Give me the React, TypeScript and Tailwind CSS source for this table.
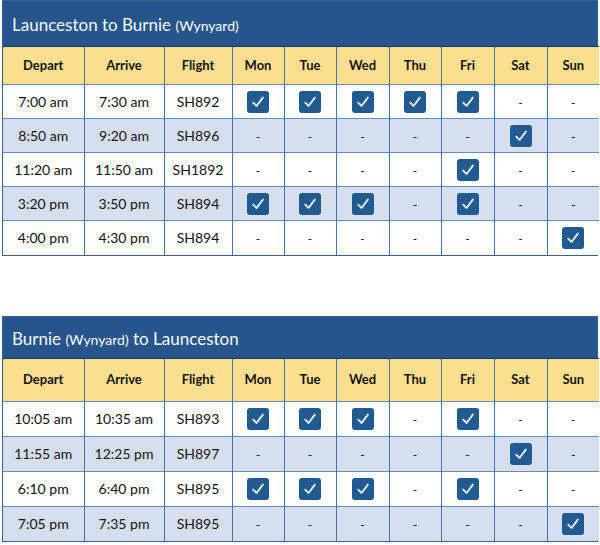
import React from "react";

type Row = { d: string; a: string; f: string; days: boolean[] };

const cols = [81, 80, 68, 52, 52, 53, 52, 53, 53, 52];
const dayNames = ["Mon", "Tue", "Wed", "Thu", "Fri", "Sat", "Sun"];

const t1: Row[] = [
  { d: "7:00 am", a: "7:30 am", f: "SH892", days: [true, true, true, true, true, false, false] },
  { d: "8:50 am", a: "9:20 am", f: "SH896", days: [false, false, false, false, false, true, false] },
  { d: "11:20 am", a: "11:50 am", f: "SH1892", days: [false, false, false, false, true, false, false] },
  { d: "3:20 pm", a: "3:50 pm", f: "SH894", days: [true, true, true, false, true, false, false] },
  { d: "4:00 pm", a: "4:30 pm", f: "SH894", days: [false, false, false, false, false, false, true] },
];

const t2: Row[] = [
  { d: "10:05 am", a: "10:35 am", f: "SH893", days: [true, true, true, false, true, false, false] },
  { d: "11:55 am", a: "12:25 pm", f: "SH897", days: [false, false, false, false, false, true, false] },
  { d: "6:10 pm", a: "6:40 pm", f: "SH895", days: [true, true, true, false, true, false, false] },
  { d: "7:05 pm", a: "7:35 pm", f: "SH895", days: [false, false, false, false, false, false, true] },
];

function Check() {
  return (
    <span className="inline-flex h-[22px] w-[22px] items-center justify-center rounded-[3px] bg-[#215a8f] align-middle">
      <svg width="16" height="16" viewBox="0 0 16 16">
        <path d="M3.2 8.6 L6.6 12 L12.8 3.6" fill="none" stroke="#dce7f4" strokeWidth="2" strokeLinecap="round" strokeLinejoin="round" />
      </svg>
    </span>
  );
}

function Timetable({
  title,
  rows,
  titleH,
  headH,
  rowH,
}: {
  title: React.ReactNode;
  rows: Row[];
  titleH: string;
  headH: string;
  rowH: string;
}) {
  return (
    <div className="ml-[2px] w-[596px] border border-[#3d5f8c]">
      <div className={`flex items-center bg-[#25558a] pl-[9px] pt-[3px] text-[17px] text-white ${titleH}`}>{title}</div>
      <table className="w-full table-fixed border-collapse text-[14px] text-[#111]">
        <colgroup>
          {cols.map((w, i) => (
            <col key={i} style={{ width: w }} />
          ))}
        </colgroup>
        <thead>
          <tr className={`bg-[#fde08f] ${headH}`}>
            {["Depart", "Arrive", "Flight", ...dayNames].map((h, i) => (
              <th
                key={h}
                className={`border-t border-t-[#1a3560] ${i > 0 ? "border-l border-l-[#4d74a8]" : ""} text-center text-[13px] font-bold`}
              >
                {h}
              </th>
            ))}
          </tr>
        </thead>
        <tbody>
          {rows.map((r, ri) => (
            <tr key={ri} className={`${ri % 2 === 1 ? "bg-[#d5dff0]" : "bg-white"} ${rowH}`}>
              {[r.d, r.a, r.f].map((v, i) => (
                <td key={i} className={`border-t border-t-[#6a8bb8] ${i > 0 ? "border-l border-l-[#4d74a8]" : ""} text-center`}>
                  {v}
                </td>
              ))}
              {r.days.map((on, i) => (
                <td key={i} className="border-l border-t border-l-[#4d74a8] border-t-[#6a8bb8] text-center">
                  {on ? <Check /> : <span className="text-[12px]">-</span>}
                </td>
              ))}
            </tr>
          ))}
        </tbody>
      </table>
    </div>
  );
}

export default function App() {
  return (
    <div className="h-[545px] w-[600px] bg-white font-['Lato','Open_Sans',sans-serif]">
      <Timetable
        titleH="h-[45px]"
        headH="h-[38px]"
        rowH="h-[34px]"
        title={
          <span>
            Launceston to Burnie <span className="text-[14px]">(Wynyard)</span>
          </span>
        }
        rows={t1}
      />
      <div className="h-[60px]" />
      <Timetable
        titleH="h-[41px]"
        headH="h-[43px]"
        rowH="h-[35px]"
        title={
          <span>
            Burnie <span className="text-[14px]">(Wynyard)</span> to Launceston
          </span>
        }
        rows={t2}
      />
    </div>
  );
}
